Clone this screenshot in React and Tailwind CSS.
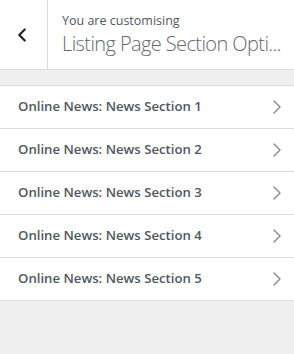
import { ChevronLeft, ChevronRight } from 'lucide-react'

const sections = [
  'Online News: News Section 1',
  'Online News: News Section 2',
  'Online News: News Section 3',
  'Online News: News Section 4',
  'Online News: News Section 5',
]

export default function App() {
  return (
    <div className="w-[294px] h-[354px] bg-[#f0f0f1] font-['Open_Sans',sans-serif] overflow-hidden">
      {/* Header */}
      <div className="flex h-[70px] bg-white border-b border-[#dcdcde]">
        <button className="w-[48px] shrink-0 flex items-center justify-center pr-[3px] border-r border-[#dcdcde] text-[#1d2327]">
          <ChevronLeft size={22} strokeWidth={2.4} />
        </button>
        <div className="pl-[14px] pt-[12px] min-w-0">
          <div className="text-[12.5px] leading-[18px] text-[#50575e]">You are customising</div>
          <div className="text-[20px] leading-[28px] font-light tracking-[-0.6px] text-[#646970] whitespace-nowrap">
            Listing Page Section Opti...
          </div>
        </div>
      </div>

      {/* Sections */}
      <ul className="mt-[15px] bg-white border-t border-[#dcdcde]">
        {sections.map((s) => (
          <li
            key={s}
            className="h-[43px] flex items-center justify-between pl-[18px] pr-[5px] border-b border-[#dcdcde]"
          >
            <span className="text-[13.2px] font-semibold text-[#50575e]">{s}</span>
            <ChevronRight size={24} strokeWidth={1.5} className="text-[#8c8f94]" />
          </li>
        ))}
      </ul>
    </div>
  )
}
